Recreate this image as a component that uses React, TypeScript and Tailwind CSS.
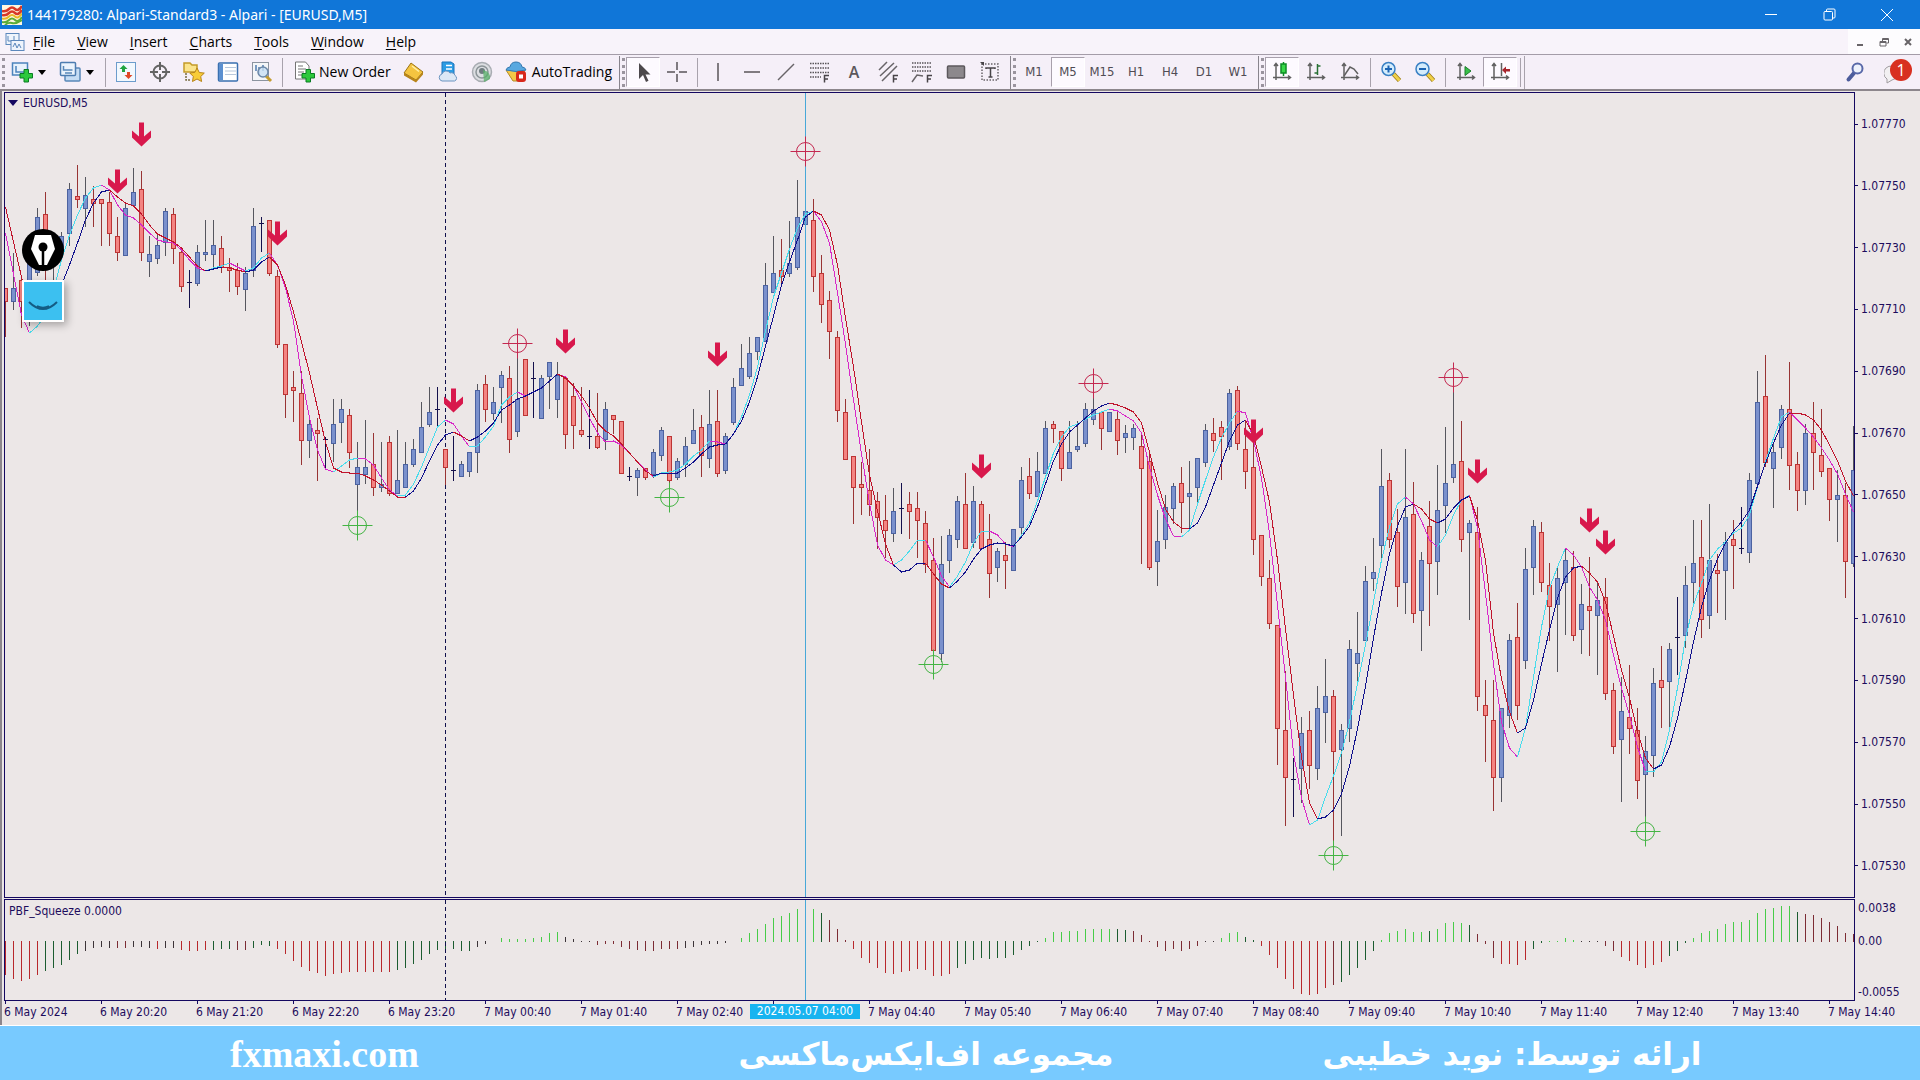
import type { ReactNode } from 'react';

type Candle = ['b' | 'r' | 'd', number, number, number, number];
type Segment = [string, number, number[]];

const BAR_STEP = 8;
const FIRST_BAR = 5.5;
const barX = (i: number) => FIRST_BAR + i * BAR_STEP;

// kind (bull / bear / doji), high, body top, body bottom, low
const CANDLES: Candle[] = [
  ['r', 288, 288, 301, 337], ['b', 253, 288, 301, 310], ['r', 277, 280, 301, 328], ['b', 250, 257, 285, 326], ['b', 208, 217, 272, 276],
  ['r', 192, 214, 240, 280], ['b', 235, 240, 260, 280], ['b', 232, 236, 250, 255], ['b', 183, 189, 233, 246], ['r', 165, 196, 199, 208],
  ['b', 177, 195, 208, 227], ['r', 186, 199, 203, 227], ['r', 199, 199, 203, 246], ['r', 192, 202, 233, 246], ['r', 217, 236, 252, 261],
  ['b', 203, 208, 255, 255], ['b', 168, 192, 205, 205], ['r', 171, 189, 252, 261], ['b', 236, 254, 261, 277], ['b', 235, 245, 258, 264],
  ['b', 208, 211, 242, 256], ['r', 208, 214, 248, 264], ['r', 248, 252, 286, 292], ['d', 270, 282, 282, 308], ['b', 245, 252, 283, 286],
  ['b', 220, 252, 254, 261], ['b', 220, 245, 254, 267], ['r', 236, 248, 267, 273], ['r', 258, 267, 270, 292], ['r', 263, 270, 286, 295],
  ['b', 267, 273, 289, 311], ['b', 208, 226, 270, 277], ['d', 217, 223, 223, 252], ['r', 220, 220, 273, 276], ['r', 270, 276, 344, 348],
  ['r', 344, 344, 394, 418], ['r', 371, 387, 390, 422], ['r', 371, 393, 440, 465], ['b', 415, 424, 440, 458], ['r', 418, 430, 433, 481],
  ['d', 437, 439, 439, 468], ['b', 399, 424, 443, 462], ['b', 399, 409, 422, 443], ['r', 409, 415, 452, 468], ['b', 442, 467, 484, 523],
  ['b', 420, 467, 474, 484], ['r', 433, 464, 487, 496], ['b', 442, 484, 487, 492], ['r', 436, 442, 493, 496], ['b', 430, 480, 493, 493],
  ['b', 442, 464, 487, 487], ['b', 439, 449, 464, 467], ['b', 402, 427, 452, 452], ['b', 387, 412, 424, 427], ['d', 387, 409, 409, 427],
  ['r', 449, 449, 467, 485], ['d', 436, 470, 470, 481], ['b', 461, 464, 476, 476], ['b', 452, 452, 471, 477], ['b', 384, 390, 452, 473],
  ['r', 375, 384, 409, 422], ['b', 387, 402, 413, 420], ['b', 371, 375, 387, 423], ['r', 366, 378, 439, 453], ['b', 343, 399, 431, 437],
  ['r', 359, 359, 415, 415], ['d', 362, 378, 378, 418], ['b', 375, 378, 418, 418], ['b', 362, 362, 376, 409], ['b', 362, 375, 399, 418],
  ['r', 378, 378, 434, 449], ['r', 383, 396, 425, 449], ['r', 387, 430, 434, 437], ['d', 390, 436, 436, 449], ['r', 393, 436, 447, 449],
  ['b', 402, 409, 439, 450], ['r', 415, 415, 419, 434], ['r', 421, 421, 473, 473], ['d', 467, 476, 476, 481], ['b', 468, 470, 477, 496],
  ['r', 468, 468, 477, 480], ['b', 449, 452, 474, 478], ['b', 427, 430, 455, 461], ['r', 436, 436, 480, 498], ['b', 458, 461, 477, 480],
  ['b', 437, 446, 464, 477], ['b', 409, 430, 443, 443], ['r', 415, 427, 455, 477], ['b', 390, 424, 458, 468], ['r', 390, 421, 473, 477],
  ['b', 433, 436, 470, 474], ['b', 378, 387, 422, 425], ['b', 344, 368, 385, 385], ['b', 337, 353, 376, 379], ['b', 337, 337, 351, 360],
  ['b', 263, 285, 341, 341], ['b', 236, 273, 292, 292], ['r', 239, 270, 276, 285], ['b', 221, 263, 273, 277], ['b', 180, 217, 267, 270],
  ['b', 151, 211, 224, 224], ['r', 199, 220, 276, 292], ['r', 255, 273, 304, 323], ['r', 291, 300, 331, 359], ['r', 331, 337, 410, 422],
  ['r', 399, 412, 459, 459], ['r', 456, 456, 487, 524], ['r', 462, 484, 487, 515], ['r', 449, 490, 504, 516], ['r', 492, 501, 517, 549],
  ['r', 495, 520, 530, 558], ['b', 488, 511, 533, 542], ['d', 483, 508, 508, 534], ['r', 492, 504, 511, 539], ['r', 492, 508, 520, 558],
  ['r', 511, 523, 564, 573], ['r', 538, 560, 650, 664], ['b', 536, 564, 653, 662], ['b', 529, 535, 560, 573], ['b', 496, 501, 539, 548],
  ['r', 473, 504, 548, 548], ['b', 486, 501, 542, 548], ['r', 501, 504, 548, 548], ['r', 514, 539, 573, 598], ['b', 548, 551, 567, 582],
  ['r', 542, 555, 560, 589], ['b', 529, 529, 570, 570], ['b', 467, 480, 527, 536], ['r', 458, 476, 493, 499], ['b', 452, 471, 496, 496],
  ['b', 421, 428, 473, 473], ['r', 421, 424, 428, 443], ['r', 431, 431, 468, 481], ['b', 421, 452, 468, 468], ['b', 421, 446, 449, 452],
  ['b', 403, 409, 443, 447], ['b', 383, 409, 419, 425], ['r', 412, 412, 428, 450], ['b', 412, 412, 431, 431], ['r', 412, 419, 440, 455],
  ['b', 425, 433, 437, 453], ['b', 424, 428, 437, 450], ['r', 435, 446, 468, 564], ['r', 450, 461, 567, 570], ['b', 510, 541, 561, 586],
  ['b', 495, 507, 539, 549], ['b', 483, 486, 508, 524], ['r', 467, 483, 502, 533], ['b', 461, 493, 496, 528], ['b', 458, 458, 487, 502],
  ['b', 424, 430, 462, 467], ['r', 418, 433, 440, 452], ['r', 421, 427, 436, 480], ['b', 389, 393, 446, 450], ['r', 386, 390, 443, 450],
  ['r', 421, 449, 471, 489], ['r', 443, 467, 539, 555], ['r', 535, 535, 576, 586], ['r', 560, 578, 623, 629], ['r', 625, 625, 728, 765],
  ['r', 671, 730, 777, 826], ['d', 758, 779, 779, 817], ['b', 717, 733, 768, 803], ['r', 711, 730, 765, 789], ['b', 686, 708, 768, 780],
  ['b', 659, 696, 712, 743], ['r', 690, 696, 751, 855], ['b', 724, 730, 749, 836], ['b', 640, 649, 728, 742], ['b', 612, 653, 663, 684],
  ['b', 566, 581, 640, 640], ['b', 538, 572, 578, 591], ['b', 449, 486, 545, 560], ['r', 473, 480, 539, 548], ['r', 509, 532, 586, 607],
  ['b', 449, 517, 582, 614], ['r', 482, 514, 613, 623], ['b', 552, 560, 610, 651], ['r', 501, 526, 563, 626], ['b', 465, 510, 561, 595],
  ['b', 427, 483, 505, 533], ['b', 377, 464, 477, 483], ['r', 421, 461, 539, 552], ['b', 520, 523, 532, 620], ['r', 507, 532, 696, 711],
  ['r', 680, 705, 715, 762], ['r', 680, 720, 777, 811], ['b', 708, 708, 777, 802], ['b', 634, 640, 715, 728], ['r', 603, 637, 705, 720],
  ['b', 548, 569, 660, 669], ['b', 520, 526, 567, 595], ['r', 522, 532, 582, 592], ['r', 563, 585, 606, 641], ['b', 566, 578, 604, 672],
  ['b', 548, 560, 582, 635], ['r', 551, 567, 635, 641], ['b', 584, 604, 629, 654], ['r', 557, 606, 610, 656], ['b', 581, 600, 615, 675],
  ['r', 578, 597, 693, 700], ['r', 683, 690, 746, 754], ['b', 677, 711, 739, 802], ['r', 665, 717, 728, 754], ['r', 708, 730, 780, 799],
  ['b', 736, 751, 774, 831], ['b', 668, 683, 755, 777], ['r', 646, 680, 687, 728], ['b', 643, 649, 681, 731], ['d', 597, 637, 637, 675],
  ['b', 566, 585, 635, 648], ['b', 520, 563, 582, 607], ['r', 520, 557, 619, 638], ['b', 504, 560, 615, 629], ['r', 554, 570, 573, 613],
  ['b', 532, 542, 570, 620], ['r', 520, 539, 545, 589], ['d', 507, 548, 548, 554], ['b', 473, 480, 552, 563], ['b', 371, 402, 483, 483],
  ['r', 355, 396, 462, 467], ['b', 443, 452, 468, 508], ['b', 405, 409, 447, 459], ['r', 362, 409, 465, 490], ['r', 452, 464, 490, 511],
  ['b', 424, 433, 490, 505], ['r', 402, 433, 452, 490], ['r', 409, 455, 471, 477], ['r', 468, 468, 499, 521], ['b', 470, 495, 499, 542],
  ['r', 483, 495, 561, 598], ['b', 426, 470, 563, 567],
];

const NAVY = '#10108c';
const RED = '#c0142c';
const CYAN = '#48dcec';
const PINK = '#d828c8';

// colour, first bar, one value per bar
const SLOW_MA: Segment[] = [
  [RED, 0, [207, 242, 277, 305]],
  [NAVY, 7, [285, 265, 243, 220, 203, 192, 190]],
  [RED, 13, [190, 197, 203, 206, 214, 225, 234, 238, 242, 248, 257, 266, 271]],
  [NAVY, 25, [271, 269, 267]],
  [RED, 27, [267, 268, 270, 272]],
  [NAVY, 30, [272, 270, 262, 257]],
  [RED, 33, [257, 265, 285, 312, 342, 373, 408, 442, 468, 472, 473, 473, 476, 480, 485, 491, 497, 497]],
  [NAVY, 50, [497, 491, 478, 461, 445, 435, 432]],
  [RED, 56, [432, 436, 441]],
  [NAVY, 58, [441, 437, 431, 423, 410, 405, 399, 396, 392, 388, 381, 374]],
  [RED, 69, [374, 378, 386, 396, 408, 423, 431, 436, 444, 453, 462, 471, 476]],
  [NAVY, 81, [476, 473, 473, 473, 468, 462, 454, 447, 445, 444, 434, 421, 402, 377, 346, 316, 285, 262, 240, 217, 211]],
  [RED, 101, [211, 215, 230, 265, 318, 367, 422, 475, 511, 544, 565]],
  [NAVY, 111, [565, 572, 570, 563, 563]],
  [RED, 115, [563, 574, 584, 588]],
  [NAVY, 118, [588, 581, 572, 559, 549, 545, 543, 544, 546, 537, 526, 507, 484, 461, 444, 432, 425, 418, 411, 406, 403]],
  [RED, 138, [403, 405, 408, 412, 423, 452, 483, 509, 522, 528, 529]],
  [NAVY, 148, [529, 523, 507, 485, 463, 441, 425, 420]],
  [RED, 155, [420, 435, 467, 502, 560, 629, 695, 757, 803, 819]],
  [NAVY, 164, [819, 817, 810, 794, 766, 729, 686, 638, 593, 554, 526, 507, 504]],
  [RED, 176, [504, 509, 519, 523]],
  [NAVY, 179, [523, 519, 508, 500, 496]],
  [RED, 183, [496, 520, 560, 633, 679, 712, 733]],
  [NAVY, 189, [733, 728, 700, 664, 630, 598, 577, 568, 566]],
  [RED, 197, [566, 573, 582, 602, 636, 670, 698, 732, 758, 769]],
  [NAVY, 206, [769, 765, 747, 718, 681, 642, 607, 580, 559, 543, 531, 522, 510, 486, 463, 443, 425, 413]],
  [RED, 223, [413, 413, 415, 420, 430, 445, 461, 481, 496]],
];

const FAST_MA: Segment[] = [
  [PINK, 0, [233, 274, 315, 333]],
  [CYAN, 3, [333, 326, 315, 290, 260, 235, 215, 198, 188, 185]],
  [PINK, 12, [185, 190, 205, 215, 218, 225, 233, 240, 242, 243, 250, 260, 268, 271]],
  [CYAN, 25, [271, 268, 266, 263]],
  [PINK, 28, [263, 267, 271]],
  [CYAN, 30, [271, 268, 258, 253]],
  [PINK, 33, [253, 265, 288, 321, 376, 418, 450, 469, 472]],
  [CYAN, 41, [472, 466, 460, 458]],
  [PINK, 44, [458, 459, 465, 478, 490, 496]],
  [CYAN, 49, [496, 495, 484, 467, 447, 427, 420]],
  [PINK, 55, [420, 424, 436, 447]],
  [CYAN, 58, [447, 446, 437, 426, 405, 397, 392]],
  [PINK, 64, [392, 396]],
  [CYAN, 65, [396, 392, 388, 381, 374]],
  [PINK, 69, [374, 377, 386, 402, 418, 433, 442, 441, 445, 453, 462, 470, 477]],
  [CYAN, 81, [477, 473, 472, 470, 464, 456, 450, 441]],
  [PINK, 88, [441, 442, 444]],
  [CYAN, 90, [444, 434, 417, 395, 367, 331, 297, 273, 249, 228, 214, 211]],
  [PINK, 101, [211, 222, 243, 293, 344, 400, 454, 503, 545, 560, 565]],
  [CYAN, 111, [565, 560, 551, 540, 540]],
  [PINK, 115, [540, 557, 576, 587]],
  [CYAN, 118, [587, 576, 562, 543, 531, 531]],
  [PINK, 123, [531, 535, 544, 547]],
  [CYAN, 126, [547, 535, 523, 501, 477, 453, 437, 427, 424, 419, 415, 412, 409]],
  [PINK, 138, [409, 411, 416, 421, 433, 467, 495, 519, 536, 537]],
  [CYAN, 147, [537, 530, 504, 480, 457, 438, 423, 411]],
  [PINK, 154, [411, 413, 440, 478, 533, 605, 677, 753, 798, 825]],
  [CYAN, 163, [825, 820, 797, 776, 753, 722, 684, 645, 602, 560, 527, 504, 497]],
  [PINK, 175, [497, 504, 521, 540, 547]],
  [CYAN, 179, [547, 535, 515, 500, 495]],
  [PINK, 183, [495, 528, 593, 664, 722, 748, 757]],
  [CYAN, 189, [757, 728, 677, 627, 588, 567, 548]],
  [PINK, 195, [548, 555, 567, 587, 600, 620, 655, 688, 715, 747, 771]],
  [CYAN, 205, [771, 772, 762, 730, 688, 638, 605, 583, 560, 549, 542, 533, 528, 515, 487, 462, 438, 417, 412]],
  [PINK, 223, [412, 420, 428, 437, 448, 460, 474, 494, 512]],
];

const SELL_ARROWS = [[141, 134], [117, 181], [277, 233], [453, 400], [565, 341], [717, 354], [981, 466], [1253, 431], [1477, 471], [1589, 520], [1605, 542]];
const TOPS = [[517, 343], [805, 151], [1093, 383], [1453, 377]];
const BOTTOMS = [[357, 525], [669, 497], [933, 664], [1333, 855], [1645, 831]];

const HIST_COLORS: Record<string, string> = { r: '#b8282c', m: '#7c2c34', g: '#1c5c30', l: '#48cc48', k: '#3c3438' };

// runs of equally coloured histogram bars, positive values go up
const SQUEEZE: [string, number[]][] = [
  ['r', [-34, -38, -40, -38, -34]], ['g', [-30, -27, -24, -19, -13]], ['k', [-10, -7, -6, -7]], ['m', [-7, -7]], ['k', [-6, -6, -7]], ['r', [-8]],
  ['k', [-7, -7]], ['r', [-9, -10, -10, -9]], ['g', [-9, -8, -8]], ['m', [-9, -9]], ['g', [-7, -4, -5]],
  ['r', [-8, -13, -20, -26, -30, -32, -35, -33, -32, -31, -31, -31, -31, -31, -31]], ['g', [-29, -27, -23, -19, -13, -9, -10, -8, -10, -10]], ['k', [-6, -3, 0]],
  ['l', [4, 3, 3, 3, 4, 5, 9, 10]], ['k', [5, 3, 1, 1]], ['m', [-4, -3, -3, -6, -8, -9, -10, -10, -8, -8, -8]],
  ['k', [-7, -6, -4, -3, -3, -2, 0]], ['l', [4, 9, 13, 18, 24, 26, 29, 33, 35, 33]], ['g', [29]], ['m', [22, 13, 2]],
  ['r', [-8, -17, -22, -27, -32, -33, -31, -30, -28, -29, -35, -35, -33]], ['g', [-27, -23, -19, -17, -18, -17, -17, -14, -9, -5, -1]],
  ['l', [4, 10, 10, 11, 11, 13, 13, 13, 13]], ['g', [13, 12]], ['m', [11, 7, 1, -6, -10, -8, -10, -8, -5]], ['k', [-1, 1]],
  ['l', [4, 9, 10]], ['g', [5, 2]], ['r', [-5, -14, -27, -38, -48, -53, -54, -53, -47]], ['m', [-44]], ['g', [-41, -34, -27, -19, -10]],
  ['l', [2, 9, 11, 13, 10, 10]], ['g', [11]], ['l', [13, 19, 20, 19]], ['g', [17]], ['m', [8, -3, -17]], ['r', [-23, -23, -24, -19]], ['g', [-8, -2]],
  ['l', [1, 1, 4, 2]], ['k', [1, 1, 1]], ['m', [-5, -10]], ['r', [-16, -20, -24, -27, -24, -21]], ['g', [-15, -10, -2]],
  ['l', [4, 9, 11, 13, 18, 20, 20, 22, 29, 33, 34, 36, 36]], ['g', [30]], ['m', [28, 27, 24, 20, 16, 9, 8]],
];
const HISTOGRAM = SQUEEZE.flatMap(([c, values]) => values.map(v => ({ color: HIST_COLORS[c], v })));

const PRICES = ['1.07770', '1.07750', '1.07730', '1.07710', '1.07690', '1.07670', '1.07650', '1.07630', '1.07610', '1.07590', '1.07570', '1.07550', '1.07530'];
const TIMES = ['6 May 2024', '6 May 20:20', '6 May 21:20', '6 May 22:20', '6 May 23:20', '7 May 00:40', '7 May 01:40', '7 May 02:40', '', '7 May 04:40',
  '7 May 05:40', '7 May 06:40', '7 May 07:40', '7 May 08:40', '7 May 09:40', '7 May 10:40', '7 May 11:40', '7 May 12:40', '7 May 13:40', '7 May 14:40'];
const MENUS = ['File', 'View', 'Insert', 'Charts', 'Tools', 'Window', 'Help'];
const TIMEFRAMES = ['M1', 'M5', 'M15', 'H1', 'H4', 'D1', 'W1'];

function Line({ segments }: { segments: Segment[] }) {
  return (
    <g fill="none" strokeWidth="1" shapeRendering="crispEdges">
      {segments.map(([color, start, ys], n) => (
        <polyline key={n} stroke={color} points={ys.map((y, i) => `${barX(start + i)},${y}`).join(' ')} />
      ))}
    </g>
  );
}

function PriceChart() {
  return (
    <svg className="block h-full w-full" role="img" aria-label="EURUSD M5 candles">
      <g transform="translate(-5 -93)">
        <path d="M445.5 93V900" stroke="#10104c" strokeDasharray="4 3" />
        {CANDLES.map(([kind, high, top, bottom, low], i) => {
          const x = barX(i);
          if (kind === 'd') return <path key={i} d={`M${x} ${high}V${low}M${x - 2.5} ${top + 0.5}h5`} stroke="#14104c" />;
          const up = kind === 'b';
          return (
            <g key={i} shapeRendering="crispEdges">
              <path d={`M${x} ${high}V${low}`} stroke={up ? '#56565e' : '#983434'} />
              <rect x={x - 2} y={top + 0.5} width="4" height={Math.max(bottom - top, 2)} fill={up ? '#7b91cd' : '#f48482'} stroke={up ? '#4c62a0' : '#bc3434'} />
            </g>
          );
        })}
        <path d="M805.5 93V900" stroke="#48a8d8" />
        <Line segments={FAST_MA} />
        <Line segments={SLOW_MA} />
        {SELL_ARROWS.map(([x, y]) => (
          <path key={`${x}-${y}`} transform={`translate(${x} ${y})`} d="M-2-11.500h5v14l7-6v7l-9.500 9-9.500-9v-7l7 6z" fill="#d8184c" />
        ))}
        {TOPS.map(([x, y]) => <Target key={x} x={x} y={y} color="#c42850" />)}
        {BOTTOMS.map(([x, y]) => <Target key={x} x={x} y={y} color="#44b444" />)}
      </g>
    </svg>
  );
}

function Target({ x, y, color }: { x: number; y: number; color: string }) {
  return (
    <g transform={`translate(${x + 0.5} ${y + 0.5})`} fill="none" stroke={color}>
      <circle r="9" />
      <path d="M-15 0h30M0-15v30" />
    </g>
  );
}

function SqueezeChart() {
  return (
    <svg className="block h-full w-full" role="img" aria-label="PBF_Squeeze histogram">
      <g transform="translate(-5 -900)">
        {HISTOGRAM.map(({ color, v }, i) => (
          <path key={i} d={`M${barX(i)} ${v > 0 ? 942 : 941}V${v > 0 ? 942 - v : 941 - v}`} stroke={color} />
        ))}
        <path d="M805.5 900V1000" stroke="#48a8d8" />
        <path d="M445.5 900V1000" stroke="#10104c" strokeDasharray="4 3" />
      </g>
    </svg>
  );
}

function Svg({ children }: { children: ReactNode }) {
  return <svg viewBox="0 0 22 22" className="size-[22px] shrink-0" fill="none" strokeWidth="1.5" aria-hidden="true">{children}</svg>;
}

function ToolButton({ label, active, children }: { label: string; active?: boolean; children: ReactNode }) {
  return (
    <button
      type="button"
      aria-label={label}
      className={`flex h-[30px] w-[34px] shrink-0 items-center justify-center ${active ? 'border border-[#a8a0ac] border-r-white border-b-white bg-[#fdfaff]' : ''}`}
    >
      {children}
    </button>
  );
}

const Separator = () => <div className="mx-[3px] h-[29px] w-px shrink-0 bg-[#a8a2ac]" />;

function Grip() {
  return (
    <div className="ml-[3px] flex h-[33px] shrink-0 items-center gap-[2px] border-l border-[#88848c] pr-px pl-[2px]">
      <div className="h-[29px] border-l-3 border-dotted border-[#9a949e]" />
    </div>
  );
}

const Caret = () => (
  <button type="button" aria-label="More" className="flex h-[30px] w-4 shrink-0 items-center">
    <svg viewBox="0 0 8 5" className="h-[5px] w-2"><path d="M0 0h8L4 5z" fill="#000" /></svg>
  </button>
);

const Plus = () => <path d="M13 8.500h4.500v4h4V17h-4v4H13v-4H9v-4.500h4z" fill="#2cc83c" stroke="#0a7c24" strokeWidth="1" />;
const Axes = () => <path d="M5 3v16M2 16.500h17M3 5l2-2.500L7 5M17 14.500l2.500 2-2.500 2" stroke="#606060" />;

function Lens({ minus }: { minus?: boolean }) {
  return (
    <Svg>
      <path d="M13.500 13l6 6.500" stroke="#9a7a18" strokeWidth="4.500" />
      <path d="M13.500 13l6 6.500" stroke="#f0d048" strokeWidth="3" />
      <circle cx="8.500" cy="8" r="6.500" fill="#d4ecfc" stroke="#3a80c4" />
      <path d={minus ? 'M5 8h7' : 'M5 8h7M8.500 4.500v7'} stroke="#1c64b4" strokeWidth="2" />
    </Svg>
  );
}

function StandardTools() {
  return (
    <>
      <div className="flex h-[33px] shrink-0 items-center pl-[2px] pr-px">
        <div className="h-[29px] border-l-3 border-dotted border-[#9a949e]" />
      </div>
      <button type="button" aria-label="New chart" className="flex h-[30px] w-8 shrink-0 items-center justify-center">
        <Svg><rect x="1.500" y="2" width="15" height="12" fill="#e8f2fc" stroke="#4c84bc" /><path d="M5 5v6h8" stroke="#4c84bc" /><Plus /></Svg>
      </button>
      <Caret />
      <button type="button" aria-label="Profiles" className="flex h-[30px] w-8 shrink-0 items-center justify-center">
        <Svg><rect x="6" y="7" width="15" height="13" rx="1" fill="#c4dcf4" stroke="#5888b8" /><rect x="1.500" y="1.500" width="15" height="13" rx="1" fill="#eaf3fc" stroke="#4c7cb0" /><path d="M4.500 5v4h9M6 12h7" stroke="#5888b8" /></Svg>
      </button>
      <Caret />
      <Separator />
      <ToolButton label="Market Watch">
        <Svg><rect x="1.500" y="1.500" width="19" height="19" fill="#f2f8fe" stroke="#6c9ccc" strokeWidth="1" /><path d="M8.500 4l4 4H10v3H7V8H4.500z" fill="#20a440" /><path d="M13.500 18l-4-4H12v-3h3v3h2.500z" fill="#e04828" /></Svg>
      </ToolButton>
      <ToolButton label="Data Window">
        <Svg><circle cx="11" cy="11" r="6.500" stroke="#646464" strokeWidth="2" /><path d="M11 1v8M11 13v8M1 11h8M13 11h8" stroke="#646464" strokeWidth="2" /></Svg>
      </ToolButton>
      <ToolButton label="Navigator">
        <Svg><path d="M1 2h6l2 2h5v7H1z" fill="#fbe48c" stroke="#c49a28" /><path d="M3 12v7h4" stroke="#786c40" strokeDasharray="2 1" /><path d="M14 7l2.300 4.500 5 .6-3.600 3.400.9 5-4.600-2.500L9.500 20.500l.8-5L6.800 12l5-.6z" fill="#f8cc38" stroke="#b88418" strokeWidth="1" /></Svg>
      </ToolButton>
      <ToolButton label="Terminal">
        <Svg><rect x="1.500" y="2" width="19" height="18" rx="1" fill="#fff" stroke="#3a70b0" /><rect x="2" y="3" width="4" height="16" fill="#5c90d0" /><path d="M8 6.500h11M8 10h11M8 13.500h11" stroke="#b8c8dc" strokeWidth="1" /></Svg>
      </ToolButton>
      <ToolButton label="Strategy Tester">
        <Svg><rect x="1.500" y="1.500" width="16" height="18" fill="#f4f6f8" stroke="#8c94a0" strokeWidth="1" /><path d="M5 4v6M8 6v8M12 4v6" stroke="#507cb0" /><path d="M15 15l5 5" stroke="#c49c30" strokeWidth="3" /><circle cx="12" cy="11" r="5" fill="#c8e0f4cc" stroke="#6c88a8" /></Svg>
      </ToolButton>
      <Separator />
      <button type="button" className="flex h-[30px] shrink-0 items-center gap-1 pr-1.5 pl-[7px] text-sm whitespace-nowrap">
        <Svg><path d="M2.500 1h10l3.500 4v13h-13.500z" fill="#fff" stroke="#747474" strokeWidth="1" /><path d="M5 5h5M5 8h8M5 11h6M5 14h4" stroke="#747474" strokeWidth="1" /><Plus /></Svg>
        New Order
      </button>
      <ToolButton label="MetaEditor">
        <Svg><path d="M8 2l12 9-7 8L1 12z" fill="#f4c440" stroke="#9c7414" strokeWidth="1" /><path d="M1 12l12 7 7-8v2.500l-7 8L1 14.500z" fill="#b88418" /><path d="M9 5l7 5.500" stroke="#fff0a8" /></Svg>
      </ToolButton>
      <ToolButton label="Market">
        <Svg><path d="M5 1h9l3 2v10H5z" fill="#2c9ce4" stroke="#1c74bc" strokeWidth="1" /><path d="M9 4.500h6M9 8h6" stroke="#fff" /><path d="M5 20a3.600 3.600 0 0 1 0-7 4.500 4.500 0 0 1 8-1 4 4 0 0 1 5 2.500 3 3 0 0 1-.5 5.500z" fill="#dce8f6" stroke="#6c94c0" strokeWidth="1" /></Svg>
      </ToolButton>
      <ToolButton label="Signals">
        <Svg><circle cx="11" cy="11" r="9.500" fill="#dcdee2" stroke="#a8acb2" /><circle cx="11" cy="11" r="6" stroke="#8c9498" /><circle cx="11" cy="10" r="3" fill="#707c80" /><path d="M12 9q8 2 7 9l-6 3z" fill="#58b068" opacity=".75" /></Svg>
      </ToolButton>
      <button type="button" className="flex h-[30px] shrink-0 items-center gap-[5px] pr-1 pl-1.5 text-sm whitespace-nowrap">
        <Svg><path d="M1 9l10-2 9 2-5 11H8z" fill="#f4c848" stroke="#b48c28" strokeWidth="1" /><path d="M1 9q1-3 4-3 1-5 6-5t6 5q3 0 4 3-10 3-20 0z" fill="#58a8e0" stroke="#3478b0" strokeWidth="1" /><rect x="11" y="10" width="10" height="11" rx="3" fill="#d8281c" /><rect x="14" y="13.500" width="4" height="4" fill="#fff" /></Svg>
        AutoTrading
      </button>
    </>
  );
}

function DrawingTools() {
  return (
    <>
      <Grip />
      <ToolButton label="Cursor" active>
        <Svg><path d="M7 2v16l4-4 3 7 2.500-1.200-3-6.300h5z" fill="#4c484c" /></Svg>
      </ToolButton>
      <ToolButton label="Crosshair"><Svg><path d="M11 1v8M11 13v8M1 11h8M13 11h8" stroke="#585458" /></Svg></ToolButton>
      <Separator />
      <ToolButton label="Vertical line"><Svg><path d="M11 2v18" stroke="#585458" /></Svg></ToolButton>
      <ToolButton label="Horizontal line"><Svg><path d="M3 11h16" stroke="#585458" /></Svg></ToolButton>
      <ToolButton label="Trendline"><Svg><path d="M3 19L19 3" stroke="#686468" /></Svg></ToolButton>
      <ToolButton label="Fibonacci retracement">
        <Svg><path d="M1 2.500h19M1 7h19M1 11.500h19M1 16h11" stroke="#585458" strokeDasharray="1.500 1" /><path d="M15.500 21.500v-7h4.500M15.500 18h3.500" stroke="#484448" /></Svg>
      </ToolButton>
      <ToolButton label="Text"><span className="text-base font-semibold text-[#5c585c]">A</span></ToolButton>
      <ToolButton label="Fibonacci channel">
        <Svg><path d="M2 9l8-8M3 15L17 2M5 20L20 5" stroke="#686468" /><path d="M16.500 21.500v-7h4.500M16.500 18h3.500" stroke="#484448" /></Svg>
      </ToolButton>
      <ToolButton label="Fibonacci fan">
        <Svg><path d="M1 2h20M1 6h20M1 10h20" stroke="#585458" strokeDasharray="1.500 1" /><path d="M1 21l5-7 6 1" stroke="#686468" /><path d="M16.500 21.500v-7h4.500M16.500 18h3.500" stroke="#484448" /></Svg>
      </ToolButton>
      <ToolButton label="Rectangle"><Svg><rect x="2.500" y="5" width="17" height="12" rx="1" fill="#8c888c" stroke="#5c585c" /></Svg></ToolButton>
      <ToolButton label="Text label">
        <Svg><rect x="3" y="3" width="16" height="16" stroke="#686468" strokeDasharray="1.500 1.500" /><path d="M7 8V7h9v1M11.500 7v9M9.500 16h4" stroke="#484448" /><path d="M1 1h4v4z" fill="#484448" /></Svg>
      </ToolButton>
    </>
  );
}

function ChartTools() {
  return (
    <>
      <Grip />
      <ToolButton label="Candlesticks" active>
        <Svg><Axes /><path d="M12.500 1v14" stroke="#0c8c24" /><rect x="10" y="3" width="5" height="9" fill="#38d848" stroke="#0c8c24" /></Svg>
      </ToolButton>
      <ToolButton label="Bar chart"><Svg><Axes /><path d="M12.500 3v11M9.500 12h3M12.500 5h3" stroke="#287034" /></Svg></ToolButton>
      <ToolButton label="Line chart"><Svg><Axes /><path d="M5 15L11 6l4 2 4 5" stroke="#606060" /></Svg></ToolButton>
      <Separator />
      <ToolButton label="Zoom in"><Lens /></ToolButton>
      <ToolButton label="Zoom out"><Lens minus /></ToolButton>
      <Separator />
      <ToolButton label="Auto scroll"><Svg><Axes /><path d="M10 5.500l6 4.500-6 4.500z" fill="#38c048" stroke="#1c7c2c" strokeWidth="1" /></Svg></ToolButton>
      <ToolButton label="Chart shift" active>
        <Svg><Axes /><path d="M12.500 2v13" stroke="#606060" /><path d="M13 9l4-3.500V8h4v2.500h-4V13z" fill="#a8242c" /></Svg>
      </ToolButton>
      <Separator />
      <div className="h-[33px] w-px shrink-0 bg-[#a8a2ac]" />
    </>
  );
}

function Toolbar() {
  return (
    <div className="flex h-[35px] shrink-0 items-center overflow-hidden border-t border-[#a49ca8] bg-[#f5eff8] font-['Open_Sans','Noto_Sans',sans-serif] text-black">
      <StandardTools />
      <DrawingTools />
      <Grip />
      {TIMEFRAMES.map(tf => (
        <ToolButton key={tf} label={tf} active={tf === 'M5'}>
          <span className="font-['DejaVu_Sans_Condensed','DejaVu_Sans',sans-serif] text-[13px] text-[#504c54]">{tf}</span>
        </ToolButton>
      ))}
      <ChartTools />
      <div className="ml-auto flex items-center gap-2 pr-1">
        <button type="button" aria-label="Search" className="flex h-[30px] w-8 items-center justify-center">
          <Svg><path d="M9 12l-5.500 6.500" stroke="#4c5c9c" strokeWidth="4" strokeLinecap="round" /><circle cx="12.500" cy="7.500" r="5" fill="#eef2fc" stroke="#5868a8" strokeWidth="2" /></Svg>
        </button>
        <button type="button" aria-label="Notifications" className="relative flex h-[30px] w-9 items-center pl-1">
          <svg viewBox="0 0 22 22" className="mt-1 size-[22px]" fill="#f2f0f2" stroke="#a09ca0"><path d="M3 20v-4a7 7 0 1 1 5 1z" /></svg>
          <span className="absolute top-[2px] right-1 flex size-[22px] items-center justify-center rounded-full bg-[#d83020] text-base text-white">1</span>
        </button>
      </div>
    </div>
  );
}

function TitleBar() {
  return (
    <header className="flex h-[29px] shrink-0 items-center bg-[#1076d8] pr-1 pl-[2px] font-['Noto_Sans','Open_Sans',sans-serif] text-white">
      <svg viewBox="0 0 20 20" className="size-5" aria-hidden="true">
        <rect width="20" height="20" fill="#fff8e0" />
        <path d="M0 6q4 1 7-2t6 0 7-3M0 10q4 1 7-2t6 0 7-3" stroke="#d83828" strokeWidth="2.500" fill="none" />
        <path d="M0 13.500q4 1 7-2t6 0 7-3" stroke="#e8b828" strokeWidth="2" fill="none" />
        <path d="M0 17q4 1 7-2t6 0 7-3M3 20q3-3 7-2t10-3" stroke="#5cac38" strokeWidth="2" fill="none" />
      </svg>
      <h1 className="pl-[5px] text-sm">144179280: Alpari-Standard3 - Alpari - [EURUSD,M5]</h1>
      <div className="ml-auto flex h-full">
        <button type="button" aria-label="Minimize" className="flex w-[58px] items-center justify-center">
          <svg viewBox="0 0 12 12" className="size-3"><path d="M0 5.500h12" stroke="#fff" /></svg>
        </button>
        <button type="button" aria-label="Restore" className="flex w-[58px] items-center justify-center">
          <svg viewBox="0 0 13 13" className="size-[13px]" fill="none" stroke="#fff"><rect x="1" y="3.500" width="8.500" height="8.500" rx="1" /><path d="M3.500 3.500V2q0-1 1-1H11q1 0 1 1v7q0 1-1 1H9.500" /></svg>
        </button>
        <button type="button" aria-label="Close" className="flex w-[58px] items-center justify-center">
          <svg viewBox="0 0 12 12" className="size-3" stroke="#fff"><path d="M0 0l12 12M12 0L0 12" /></svg>
        </button>
      </div>
    </header>
  );
}

function MenuBar() {
  return (
    <nav className="flex h-[25px] shrink-0 items-center bg-[#f8f3fa] pl-[5px] font-['Open_Sans','Noto_Sans',sans-serif] text-sm text-black">
      <svg viewBox="0 0 20 20" className="mr-[3px] size-5" fill="#eef4fc" stroke="#5c88bc" aria-hidden="true">
        <rect x="1" y="1.500" width="13" height="11" /><path d="M3 4v5h3M9 4v6" /><rect x="6" y="8.500" width="13" height="10" /><path d="M8 15l2-4 2 5 2-4 2 4" fill="none" />
      </svg>
      {MENUS.map(m => (
        <button key={m} type="button" className="mr-3 px-[5px] leading-6">
          <span className="underline underline-offset-2">{m[0]}</span>{m.slice(1)}
        </button>
      ))}
      <div className="ml-auto flex h-full text-[#686468]">
        <button type="button" aria-label="Minimize chart" className="flex w-6 items-center justify-center bg-white/70">
          <svg viewBox="0 0 10 10" className="size-2.5" stroke="currentColor" strokeWidth="2"><path d="M2 8h6" /></svg>
        </button>
        <button type="button" aria-label="Restore chart" className="flex w-6 items-center justify-center bg-white/70">
          <svg viewBox="0 0 10 10" className="size-2.5" fill="none" stroke="currentColor"><path d="M1 4.500h6v4.500H1zM1 5.500h6M3.500 4V1.500h6V6H7.500M3.500 2.500h6" /></svg>
        </button>
        <button type="button" aria-label="Close chart" className="flex w-6 items-center justify-center bg-white/70">
          <svg viewBox="0 0 10 10" className="size-2.5" stroke="currentColor" strokeWidth="2"><path d="M2 2l6 6M8 2L2 8" /></svg>
        </button>
      </div>
    </nav>
  );
}

function FloatingTools() {
  return (
    <div className="absolute top-[136px] left-[17px] flex flex-col items-start gap-[9px]">
      <button type="button" aria-label="Pen" className="size-[42px] rounded-full bg-black">
        <svg viewBox="0 0 42 42" className="size-[42px]">
          <path d="M13 6h16l4 14-8 16H17L9 20z" fill="#fff" />
          <path d="M21 20v17" stroke="#000" strokeWidth="2.500" />
          <circle cx="21" cy="18" r="4.500" />
        </svg>
      </button>
      <button type="button" aria-label="Board" className="size-[42px] border-2 border-white bg-[#3cc0f0] shadow-[3px_3px_8px_rgba(0,0,0,0.3)]">
        <svg viewBox="0 0 38 38" className="size-[38px]" fill="none" stroke="#145c84" strokeWidth="2">
          <path d="M5 20q14 14 28 0" /><path d="M13 24q6 3 12 0" strokeWidth="1.500" />
        </svg>
      </button>
    </div>
  );
}

export default function App() {
  return (
    <div className="flex h-screen min-h-[600px] flex-col overflow-hidden bg-[#ece7e8]">
      <TitleBar />
      <MenuBar />
      <Toolbar />
      <main className="relative flex min-h-0 flex-1 flex-col border-t-2 border-l-2 border-[#8c868c] bg-[#ece7e7] pt-px pl-[2px] font-['DejaVu_Sans_Condensed','DejaVu_Sans',sans-serif] text-xs text-[#1c0c5c]">
        <div className="flex min-h-0 flex-1">
          <section className="relative min-w-0 flex-1 border border-[#140860]">
            <h2 className="absolute top-[2px] left-[3px] flex items-center gap-[5px]">
              <svg viewBox="0 0 10 6" className="h-[6px] w-2.5"><path d="M0 0h10L5 6z" fill="#140860" /></svg>
              EURUSD,M5
            </h2>
            <PriceChart />
            <FloatingTools />
          </section>
          <ul className="flex w-[65px] shrink-0 flex-col justify-between pt-6 pb-6 leading-4">
            {PRICES.map(p => (
              <li key={p} className="flex items-center gap-[3px]"><span className="h-px w-[3px] bg-[#140860]" />{p}</li>
            ))}
          </ul>
        </div>
        <div className="mt-px flex h-[102px] shrink-0">
          <section className="relative min-w-0 flex-1 border border-[#140860]">
            <h2 className="absolute top-[3px] left-1">PBF_Squeeze 0.0000</h2>
            <SqueezeChart />
          </section>
          <ul className="flex w-[65px] shrink-0 flex-col pt-px pl-[3px] leading-4">
            <li className="pb-[17px]">0.0038</li>
            <li className="pb-[35px]">0.00</li>
            <li>-0.0055</li>
          </ul>
        </div>
        <div className="relative flex h-6 shrink-0 overflow-hidden">
          {TIMES.map((t, i) => (
            <div key={i} className="w-24 shrink-0 whitespace-nowrap">
              <div className="ml-px h-[3px] w-px bg-[#140860]" />
              <div className="leading-4">{t}</div>
            </div>
          ))}
          <time className="absolute top-[3px] left-[746px] w-[110px] bg-[#18b4f0] text-center leading-[15px] text-white">2024.05.07 04:00</time>
        </div>
      </main>
      <footer className="grid h-[55px] shrink-0 grid-cols-[650fr_552fr_620fr_98fr] items-center border-t border-white bg-[#78caff] font-bold whitespace-nowrap text-white">
        <a href="https://fxmaxi.com" className="pl-[230px] font-['Liberation_Serif',serif] text-[38px]">fxmaxi.com</a>
        <p dir="rtl" lang="fa" className="text-center font-['DejaVu_Sans',sans-serif] text-[31px]">مجموعه اف‌ایکس‌ماکسی</p>
        <p dir="rtl" lang="fa" className="text-center font-['DejaVu_Sans',sans-serif] text-[31px]">ارائه توسط: نوید خطیبی</p>
      </footer>
    </div>
  );
}
